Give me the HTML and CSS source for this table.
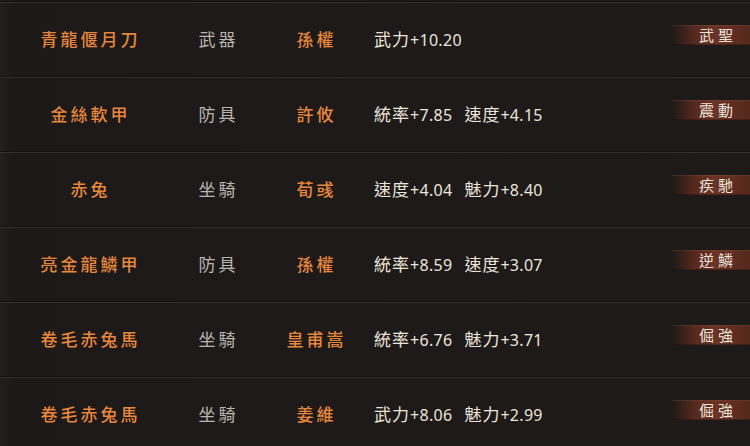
FILE: index.html
```html
<!DOCTYPE html>
<html lang="zh-Hant">
<head>
    <meta charset="UTF-8">
    <meta name="viewport" content="width=device-width, initial-scale=1.0">
    <title>寶物</title>
    <link rel="stylesheet" href="styles.css">
</head>
<body>
    <div id="treasure-list">
        <div class="row">
            <div class="item">青龍偃月刀</div>
            <div class="kind">武器</div>
            <div class="owner">孫權</div>
            <div class="stats"><span class="stat">武力<b>+10.20</b></span></div>
            <div class="badge">武聖</div>
        </div>
        <div class="row">
            <div class="item">金絲軟甲</div>
            <div class="kind">防具</div>
            <div class="owner">許攸</div>
            <div class="stats"><span class="stat">統率<b>+7.85</b></span><span class="stat">速度<b>+4.15</b></span></div>
            <div class="badge">震動</div>
        </div>
        <div class="row">
            <div class="item">赤兔</div>
            <div class="kind">坐騎</div>
            <div class="owner">荀彧</div>
            <div class="stats"><span class="stat">速度<b>+4.04</b></span><span class="stat">魅力<b>+8.40</b></span></div>
            <div class="badge">疾馳</div>
        </div>
        <div class="row">
            <div class="item">亮金龍鱗甲</div>
            <div class="kind">防具</div>
            <div class="owner">孫權</div>
            <div class="stats"><span class="stat">統率<b>+8.59</b></span><span class="stat">速度<b>+3.07</b></span></div>
            <div class="badge">逆鱗</div>
        </div>
        <div class="row">
            <div class="item">卷毛赤兔馬</div>
            <div class="kind">坐騎</div>
            <div class="owner">皇甫嵩</div>
            <div class="stats"><span class="stat">統率<b>+6.76</b></span><span class="stat">魅力<b>+3.71</b></span></div>
            <div class="badge">倔強</div>
        </div>
        <div class="row">
            <div class="item">卷毛赤兔馬</div>
            <div class="kind">坐騎</div>
            <div class="owner">姜維</div>
            <div class="stats"><span class="stat">武力<b>+8.06</b></span><span class="stat">魅力<b>+2.99</b></span></div>
            <div class="badge">倔強</div>
        </div>
    </div>
</body>
</html>
```

FILE: styles.css
```css
body {
    margin: 0;
    background: #1e1a19;
    font-family: "Noto Sans CJK TC", "Noto Sans CJK SC", sans-serif;
    height: 446px;
    overflow: hidden;
}
#treasure-list {
    padding-top: 1px;
    background: linear-gradient(90deg, #231f1e 0, #1d1918 12px, #1e1a19 100%);
}
.row {
    display: grid;
    grid-template-columns: 178px 78px 118px 1fr 78px;
    align-items: center;
    height: 74px;
    border-top: 1px solid #121010;
    box-shadow: inset 0 1px 0 #362e2a;
}
.item, .kind, .owner {
    text-align: center;
    font-size: 17px;
    font-weight: 500;
    line-height: 20px;
    letter-spacing: 3px;
    padding-left: 3px;
}
.item, .owner { color: #e6873d; }
.kind { color: #bab5ae; font-weight: 400; }
.stats {
    color: #ebe4da;
    font-size: 17px;
    line-height: 20px;
    letter-spacing: 1px;
}
.stat { margin-right: 12px; }
.stat b {
    font-family: "Noto Sans", sans-serif;
    font-weight: 400;
    font-size: 16px;
    letter-spacing: 0.3px;
}
.badge {
    align-self: start;
    margin-top: 23px;
    height: 20px;
    line-height: 20px;
    padding-left: 14px;
    text-align: center;
    color: #ece4dc;
    font-size: 15px;
    letter-spacing: 4px;
    background: linear-gradient(90deg, rgba(100, 46, 32, 0) 0, #5a2a1e 24px, #6a3325 55%, #55281d 100%);
    box-shadow: inset 0 1px 0 rgba(160, 100, 80, 0.2), inset 0 -1px 0 rgba(0, 0, 0, 0.25);
}
```
